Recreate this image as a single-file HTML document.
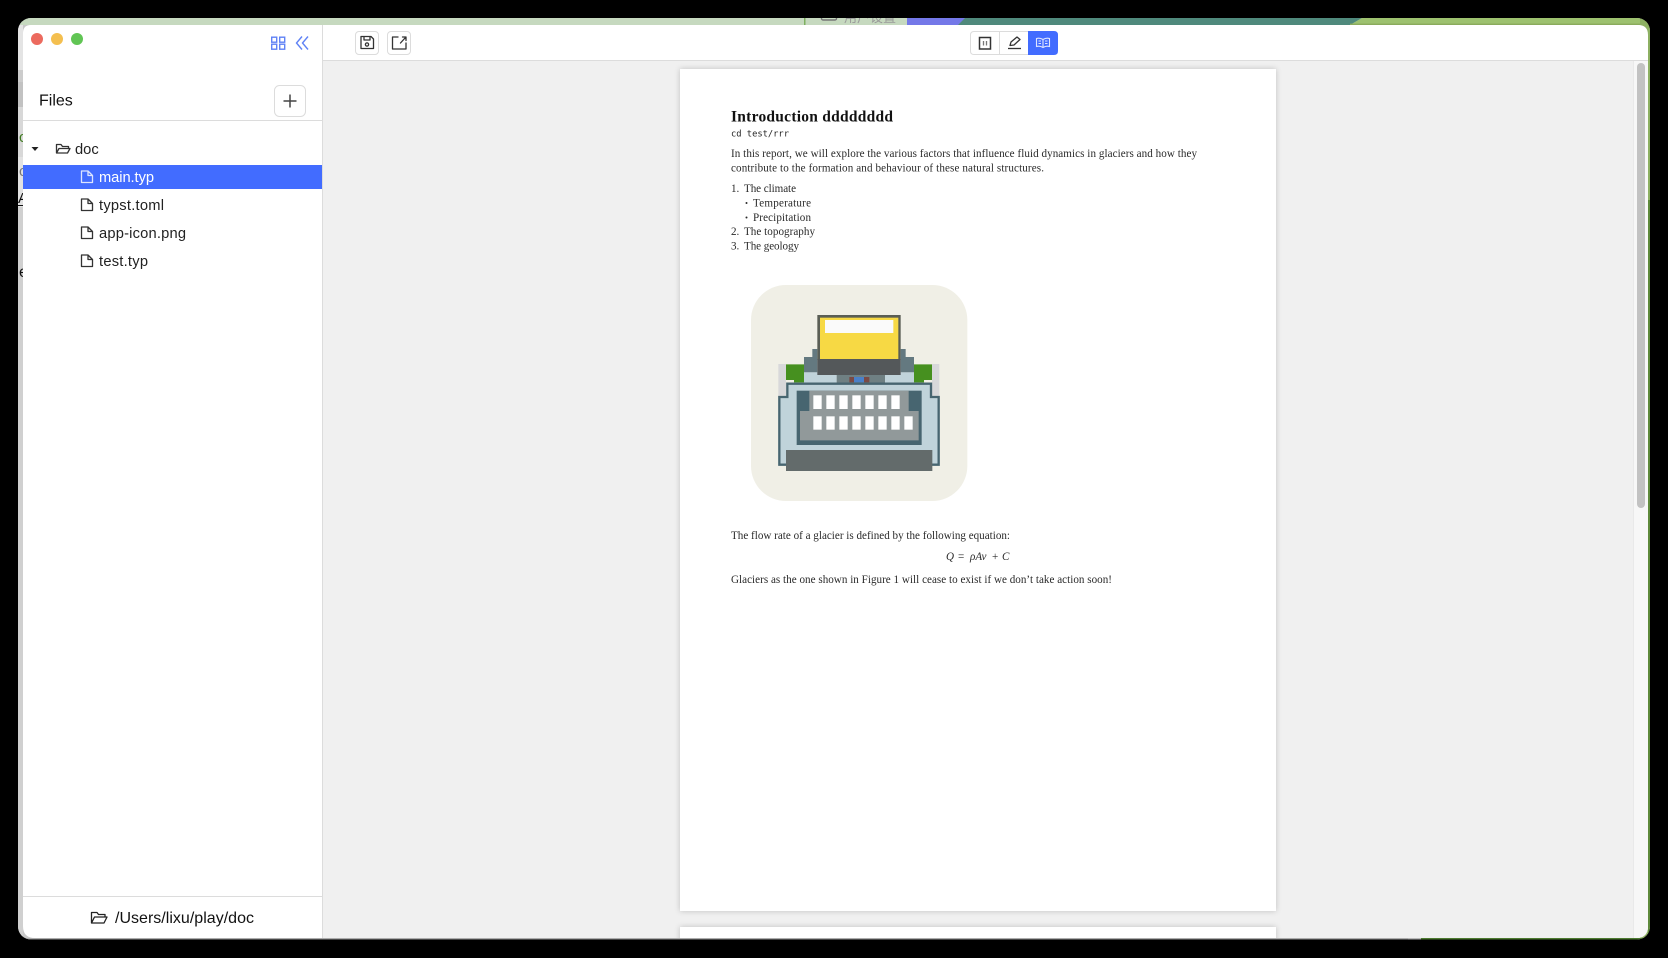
<!DOCTYPE html>
<html><head><meta charset="utf-8"><title>Typst editor</title>
<style>
html,body{margin:0;padding:0;background:#000;width:1668px;height:958px;overflow:hidden}
svg{display:block}
.s{font-family:"Liberation Sans",sans-serif;fill:#222}
.d{font-family:"Liberation Serif",serif;fill:#2a2a2a;font-size:11.1px}
.ic{fill:none;stroke:#333;stroke-width:1.3;stroke-linejoin:round;stroke-linecap:round}
</style></head><body>
<svg width="1668" height="958" viewBox="0 0 1668 958" xmlns="http://www.w3.org/2000/svg">
<defs>
<clipPath id="win"><rect x="18" y="18" width="1632" height="921.5" rx="13"/></clipPath>
<clipPath id="inner"><path d="M31 25H1638Q1648 25 1648 35V926Q1648 938 1636 938H35Q23 938 23 926V33Q23 25 31 25Z"/></clipPath>
<clipPath id="strip"><rect x="18" y="25" width="5" height="914"/></clipPath>
<clipPath id="topstrip"><rect x="18" y="18" width="1632" height="7"/></clipPath>
</defs>
<rect width="1668" height="958" fill="#000"/>
<g clip-path="url(#win)">
  <!-- background app edges -->
  <rect x="18" y="18" width="1632" height="922" fill="#c8c8c8"/>
  <rect x="18" y="18" width="890" height="7" fill="#c6d9bf"/>
  <rect x="907" y="18" width="60" height="7" fill="#7478e8"/>
  <path d="M958 25L965 18H1362L1350 25Z" fill="#4f897c"/>
  <path d="M1350 25L1362 18H1650V25Z" fill="#9dc16f"/>
  <rect x="1350" y="23.6" width="300" height="1.4" fill="#8aab5c"/>
  <rect x="1640" y="18" width="10" height="922" fill="#8db062"/>
  <rect x="1648" y="200" width="2" height="740" fill="#5f8a3c"/>
  <rect x="804" y="18" width="1.5" height="7" fill="#7db060"/>
  <g clip-path="url(#topstrip)">
    <rect x="821.5" y="8" width="15" height="12" rx="1.5" fill="none" stroke="#777" stroke-width="1.4"/>
    <text x="844" y="22" font-family="'Liberation Sans','Noto Sans CJK SC',sans-serif" font-size="13" fill="#999">用户设置</text>
  </g>
  <!-- left strip -->
  <rect x="18" y="25" width="5" height="45" fill="#e4e4e4"/>
  <rect x="18" y="70" width="5" height="12" fill="#cccccc"/>
  <rect x="18" y="82" width="5" height="25" fill="#c2c2c2"/>
  <rect x="18" y="107" width="5" height="50" fill="#d8d8d8"/>
  <rect x="18" y="157" width="5" height="50" fill="#e2e2e2"/>
  <rect x="18" y="207" width="5" height="733" fill="#d0d0d0"/>
  <g clip-path="url(#strip)">
    <text x="19" y="142" font-family="'Liberation Sans',sans-serif" font-size="15" fill="#3f7a20">c</text>
    <text x="19" y="176" font-family="'Liberation Sans',sans-serif" font-size="15" fill="#777">c</text>
    <text x="18" y="203" font-family="'Liberation Sans',sans-serif" font-size="15" fill="#111">A</text>
    <rect x="18" y="205" width="5" height="1" fill="#111"/>
    <text x="19" y="277" font-family="'Liberation Sans',sans-serif" font-size="16" fill="#111">e</text>
  </g>
  <rect x="18" y="938.5" width="1390" height="1.5" fill="#8f8f8f"/>
  <rect x="1408" y="938.500" width="13" height="1.500" fill="#a9a9a9"/>
  <rect x="1421" y="938" width="228" height="2" fill="#4d7a30"/>
</g>

<g clip-path="url(#inner)">
  <rect x="23" y="25" width="1625" height="914" fill="#fff"/>
  <!-- main -->
  <rect x="323" y="61" width="1326" height="878" fill="#f0f0f0"/>
  <rect x="322" y="25" width="1" height="914" fill="#dcdcdc"/>
  <rect x="323" y="60" width="1326" height="1" fill="#dcdcdc"/>
  <!-- scrollbar -->
  <rect x="1633" y="61" width="15" height="878" fill="#f7f7f7"/>
  <rect x="1633" y="61" width="1" height="878" fill="#e9e9e9"/>
  <rect x="1637" y="63" width="8" height="445" rx="4" fill="#c2c2c2"/>
  <!-- sidebar lines -->
  <rect x="23" y="120" width="299" height="1" fill="#dcdcdc"/>
  <rect x="23" y="896" width="299" height="1" fill="#dcdcdc"/>
  <rect x="23" y="165" width="299" height="24" fill="#426cff"/>

  <!-- pages -->
  <g style="filter:drop-shadow(0 0 3px rgba(0,0,0,.2))">
    <rect x="680" y="69" width="596" height="842" fill="#fff"/>
    <rect x="680" y="927" width="596" height="30" fill="#fff"/>
  </g>
</g>

<!-- traffic lights -->
<circle cx="37" cy="39" r="6" fill="#ec6a5e"/>
<circle cx="57" cy="39" r="6" fill="#f4bf4f"/>
<circle cx="77" cy="39" r="6" fill="#61c554"/>

<!-- sidebar top icons -->
<g fill="none" stroke="#5f82f5" stroke-width="1.4">
  <rect x="271.700" y="37.200" width="5" height="5"/><rect x="279.700" y="37.200" width="5" height="5"/>
  <rect x="271.700" y="44.200" width="5" height="5"/><rect x="279.700" y="44.200" width="5" height="5"/>
  <path d="M302 36.500L296.500 43L302 49.500M308 36.500L302.500 43L308 49.500"/>
</g>

<text class="s" x="39" y="105.500" font-size="16" style="fill:#111">Files</text>
<rect x="274.500" y="85.500" width="31" height="31" rx="5" fill="#fff" stroke="#dcdcdc"/>
<path d="M290 94.500V107.500M283.500 101H296.500" stroke="#444" stroke-width="1.500" fill="none"/>

<!-- tree -->
<path d="M31.500 147H38.500L35 151Z" fill="#222"/>
<path class="ic" d="M56.500 153V144.500H61L62.500 146.500H68.500V148.500M56.500 153L59 148.500H70L67.500 153Z"/>
<text class="s" x="75" y="154" font-size="14.700">doc</text>

<g fill="none" stroke-width="1.300" stroke-linejoin="round">
  <path d="M81.500 171H88L92.500 175.500V182.500H81.500Z M88 171V175.500H92.500" stroke="#dce4ff"/>
  <path d="M81.500 199H88L92.500 203.500V210.500H81.500Z M88 199V203.500H92.500" stroke="#333"/>
  <path d="M81.500 227H88L92.500 231.500V238.500H81.500Z M88 227V231.500H92.500" stroke="#333"/>
  <path d="M81.500 255H88L92.500 259.500V266.500H81.500Z M88 255V259.500H92.500" stroke="#333"/>
</g>
<text class="s" x="99" y="182" font-size="14.700" textLength="55" style="fill:#fff;font-weight:500">main.typ</text>
<text class="s" x="99" y="210" font-size="14.700" textLength="65">typst.toml</text>
<text class="s" x="99" y="238" font-size="14.700" textLength="87">app-icon.png</text>
<text class="s" x="99" y="266" font-size="14.700" textLength="49">test.typ</text>

<!-- footer -->
<path class="ic" d="M91.500 923V912.500H97L98.500 914.500H105V917M91.500 923L94.500 917H107L104 923Z" style="stroke:#222"/>
<text class="s" x="115" y="923" font-size="16" textLength="139" style="fill:#111">/Users/lixu/play/doc</text>

<!-- toolbar buttons -->
<rect x="355.500" y="31.500" width="23" height="23" rx="3.500" fill="#fff" stroke="#dcdcdc"/>
<rect x="387.500" y="31.500" width="23" height="23" rx="3.500" fill="#fff" stroke="#dcdcdc"/>
<path class="ic" d="M361 36.500H371L373.500 39V48.500H361Z M364 36.500V40H370V36.500"/>
<circle cx="367" cy="44.500" r="1.600" class="ic"/>
<path class="ic" d="M398 37H392.500V49H406V43M400.500 43L405.500 37.500M402.500 37H406V40.500"/>

<!-- segmented -->
<path d="M974 31.500H1028.500V54.500H974Q970.500 54.500 970.500 51V35Q970.500 31.500 974 31.500Z" fill="#fff" stroke="#dcdcdc"/>
<path d="M1028 31H1054Q1058 31 1058 35V51Q1058 55 1054 55H1028Z" fill="#426cff"/>
<rect x="999" y="31.500" width="1" height="23" fill="#dcdcdc"/>
<rect x="979.500" y="37.500" width="11" height="11.500" fill="none" stroke="#333" stroke-width="1.500"/>
<path d="M983.500 41V45.500M986.500 41V45.500" stroke="#777" stroke-width="1.300"/>
<path class="ic" d="M1010 45.500L1011 42L1017 37L1020 39.500L1014 45L1010 45.500Z"/>
<path d="M1008 48.500H1021" stroke="#333" stroke-width="1.300"/>
<path d="M1043 39.500C1041 38.300 1038.500 38 1036.500 38.500V46.500C1038.500 46 1041 46.300 1043 47.500C1045 46.300 1047.500 46 1049.500 46.500V38.500C1047.500 38 1045 38.300 1043 39.500ZM1043 39.500V47.500M1038.500 41H1041M1038.500 43.500H1041M1045 41H1047.500M1045 43.500H1047.500" fill="none" stroke="#dfe6ff" stroke-width="1.100"/>

<!-- document -->
<g style="filter:blur(.3px)">
  <text x="731" y="121.500" font-family="'Liberation Serif',serif" font-weight="bold" font-size="15.500" fill="#111" textLength="162">Introduction dddddddd</text>
  <text x="731" y="136.500" font-family="'DejaVu Sans Mono',monospace" font-size="8.800" fill="#222" textLength="58">cd test/rrr</text>
  <text class="d" x="731" y="157" textLength="466">In this report, we will explore the various factors that influence fluid dynamics in glaciers and how they</text>
  <text class="d" x="731" y="171.500" textLength="313">contribute to the formation and behaviour of these natural structures.</text>
  <text class="d" x="731" y="192">1.</text><text class="d" x="744" y="192" textLength="52">The climate</text>
  <circle cx="746.500" cy="203" r="1" fill="#2a2a2a"/><text class="d" x="753" y="206.500" textLength="58">Temperature</text>
  <circle cx="746.500" cy="217.500" r="1" fill="#2a2a2a"/><text class="d" x="753" y="221" textLength="58">Precipitation</text>
  <text class="d" x="731" y="235">2.</text><text class="d" x="744" y="235" textLength="71">The topography</text>
  <text class="d" x="731" y="249.500">3.</text><text class="d" x="744" y="249.500" textLength="55">The geology</text>
  <text class="d" x="731" y="539" textLength="279">The flow rate of a glacier is defined by the following equation:</text>
  <text class="d" x="946" y="560" font-style="italic">Q</text>
  <text class="d" x="958" y="560">=</text>
  <text class="d" x="970" y="560" font-style="italic">ρAv</text>
  <text class="d" x="992" y="560">+</text>
  <text class="d" x="1002" y="560" font-style="italic">C</text>
  <text class="d" x="731" y="583" textLength="381">Glaciers as the one shown in Figure 1 will cease to exist if we don’t take action soon!</text>
</g>

<!-- typewriter image, coordinates are 3× -->
<svg x="740" y="275" width="250" height="240" viewBox="0 0 750 720">
  <rect x="33" y="30" width="649" height="648" rx="105" fill="#f0efe6"/>
  <rect x="115" y="267" width="23" height="98" fill="#d8d8da"/>
  <rect x="576" y="267" width="22" height="98" fill="#d8d8da"/>
  <path d="M138 268H192V322H162V315H138Z" fill="#46901f"/>
  <path d="M576 268H522V322H552V315H576Z" fill="#46901f"/>
  <path d="M217 222H232V292H192V246H217Z" fill="#647980"/>
  <path d="M497 222H482V292H522V246H497Z" fill="#647980"/>
  <rect x="192" y="292" width="98" height="32" fill="#c0d3da"/>
  <rect x="435" y="292" width="87" height="32" fill="#c0d3da"/>
  <rect x="290" y="298" width="145" height="26" fill="#6f8083"/>
  <rect x="328" y="306" width="14" height="16" fill="#7a4a45"/>
  <rect x="342" y="306" width="30" height="16" fill="#4a80c8"/>
  <rect x="372" y="306" width="16" height="16" fill="#7a4a45"/>
  <rect x="232" y="120" width="250" height="135" fill="#5a5e55"/>
  <rect x="240" y="128" width="235" height="124" fill="#f7d944"/>
  <rect x="255" y="135" width="205" height="39" fill="#fafafa"/>
  <rect x="232" y="252" width="250" height="48" fill="#54585a"/>
  <path d="M118 569V366H142V326H573V366H596V569Z" fill="#c0d3da" stroke="#476570" stroke-width="7"/>
  <rect x="170" y="347" width="375" height="163" fill="#476570"/>
  <path d="M208 347H506V408H536V496H180V408H208Z" fill="#91999a"/>
  <g fill="#fff">
    <rect x="220" y="361" width="25" height="41"/><rect x="259" y="361" width="25" height="41"/><rect x="298" y="361" width="25" height="41"/><rect x="337" y="361" width="25" height="41"/><rect x="376" y="361" width="25" height="41"/><rect x="415" y="361" width="25" height="41"/><rect x="454" y="361" width="25" height="41"/>
    <rect x="220" y="424" width="25" height="40"/><rect x="259" y="424" width="25" height="40"/><rect x="298" y="424" width="25" height="40"/><rect x="337" y="424" width="25" height="40"/><rect x="376" y="424" width="25" height="40"/><rect x="415" y="424" width="25" height="40"/><rect x="454" y="424" width="25" height="40"/><rect x="493" y="424" width="25" height="40"/>
  </g>
  <rect x="138" y="525" width="439" height="63" fill="#636b6b"/>
</svg>
</svg>
</body></html>
